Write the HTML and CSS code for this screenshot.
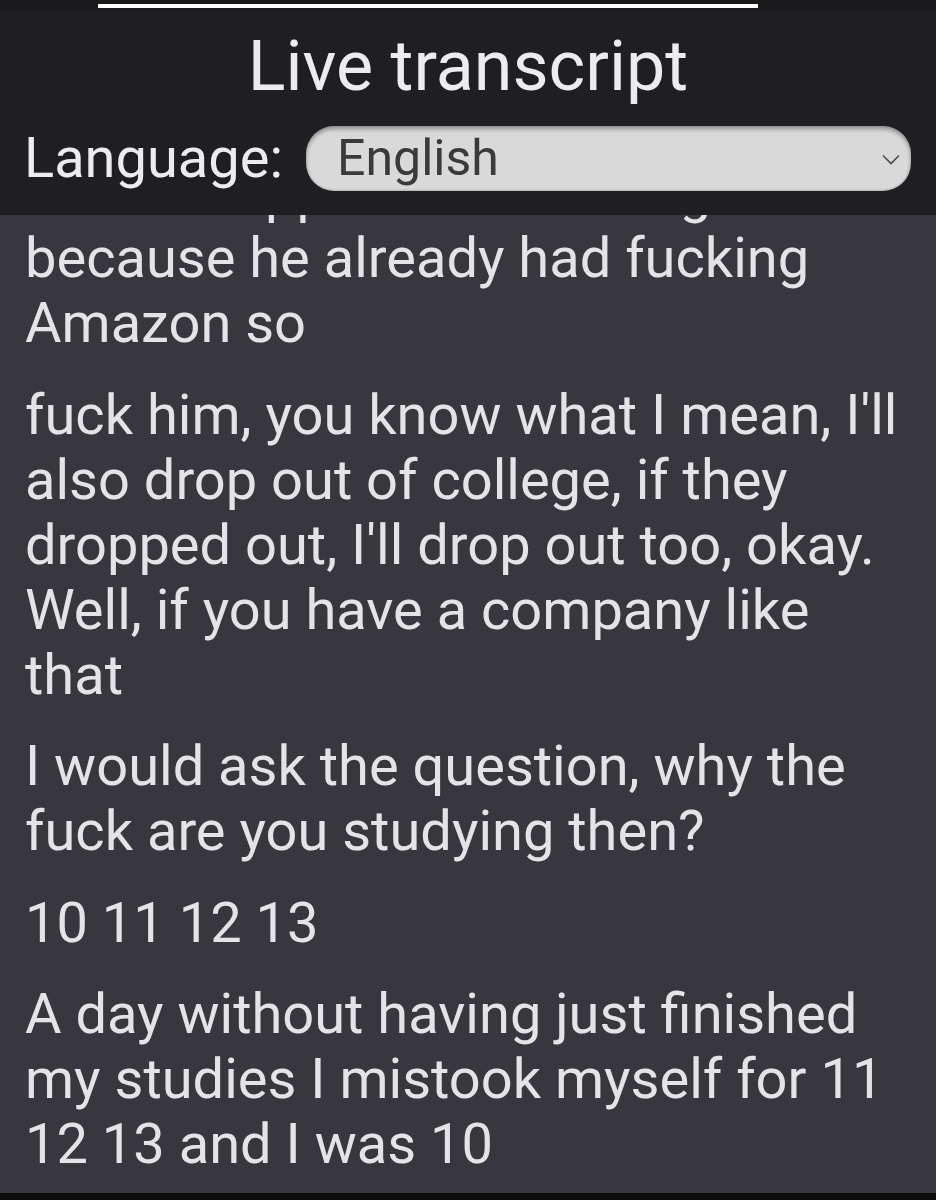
FILE: index.html
```html
<!DOCTYPE html>
<html lang="en">
<head>
  <meta charset="UTF-8">
  <title>Live transcript</title>
  <link rel="stylesheet" href="styles.css">
</head>
<body>
  <div class="status-strip"><div class="handle"></div></div>

  <header class="header">
    <h1>Live transcript</h1>
    <div class="language-row">
      <label for="language">Language:</label>
      <div class="select-wrap">
        <select id="language">
          <option>English</option>
          <option>Español</option>
          <option>Deutsch</option>
        </select>
        <svg class="chevron" width="18" height="11" viewBox="0 0 18 11">
          <path d="M1 1.5 L9 9.5 L17 1.5" fill="none" stroke="#4a4a4a" stroke-width="1.6"/>
        </svg>
      </div>
    </div>
  </header>

  <main class="transcript">
    <p>I never happened to him big because he already had fucking Amazon so</p>
    <p>fuck him, you know what I mean, I'll also drop out of college, if they dropped out, I'll drop out too, okay. Well, if you have a company like that</p>
    <p>I would ask the question, why the fuck are you studying then?</p>
    <p>10 11 12 13</p>
    <p>A day without having just finished my studies I mistook myself for 11 12 13 and I was 10</p>
  </main>

  <div class="nav-strip"></div>
</body>
</html>
```

FILE: styles.css
```css
:root {
  --strip-bg: #19191b;
  --header-bg: #1f1e23;
  --content-bg: #38373e;
  --text: #e4e4e6;
  --select-bg: #d9d9d9;
  --select-text: #3a3a3c;
}

body {
  margin: 0;
  background: var(--content-bg);
  font-family: Roboto, "Liberation Sans", sans-serif;
  color: var(--text);
}

.status-strip {
  height: 10px;
  background: var(--strip-bg);
  display: flex;
  justify-content: center;
  padding-top: 4px;
  box-sizing: border-box;
}

.handle {
  width: 660px;
  height: 4px;
  background: #ffffff;
  margin-left: -81px;
}

.header {
  background: var(--header-bg);
  padding: 15px 25px 24px 25px;
}

h1 {
  margin: 0;
  text-align: center;
  font-size: 70px;
  font-weight: 400;
  line-height: normal;
  color: #ececee;
}

.language-row {
  display: flex;
  align-items: center;
  margin-top: 18px;
  gap: 23px;
}

.language-row label {
  font-size: 56px;
  line-height: normal;
  color: #ececee;
  margin-left: -1px;
}

.select-wrap {
  position: relative;
  flex: 1;
}

select {
  appearance: none;
  -webkit-appearance: none;
  width: 100%;
  height: 65px;
  border: none;
  border-radius: 28px;
  background: var(--select-bg);
  box-shadow: inset 0 3px 4px rgba(0, 0, 0, 0.35), inset 0 -1px 2px rgba(0, 0, 0, 0.15);
  color: var(--select-text);
  font-family: inherit;
  font-size: 50px;
  padding: 0 0 0 31px;
  outline: none;
}

.chevron {
  position: absolute;
  right: 11px;
  top: 28px;
  pointer-events: none;
}

.transcript {
  height: 978px;
  overflow: hidden;
  padding: 0 25px;
}

.transcript p {
  margin: 0 0 26.5px 0;
  font-size: 56px;
  line-height: 65px;
}

/* first line sits under the header, only its descenders peek out */
.transcript p:first-child {
  margin-top: -54px;
}

.nav-strip {
  height: 8px;
  background: #0c0c0d;
}
```
